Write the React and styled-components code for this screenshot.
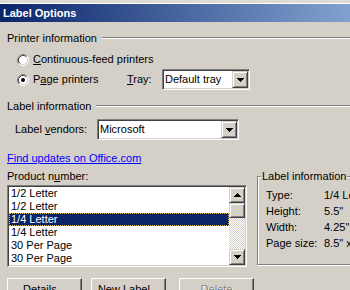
import React from 'react';
import styled, { createGlobalStyle } from 'styled-components';

const Global = createGlobalStyle`
  html, body { margin: 0; padding: 0; }
  body {
    background: #D4D0C8;
    font-family: "Liberation Sans", Arial, sans-serif;
    font-size: 11px;
    color: #000;
  }
  * { box-sizing: border-box; }
`;

const Window = styled.div`
  width: 350px;
  height: 290px;
  overflow: hidden;
  background: #D4D0C8;
  display: flex;
  flex-direction: column;
`;

const BehindStrip = styled.div`
  flex: none;
  height: 4px;
  overflow: hidden;
  background: #DEDBD4;
  border-bottom: 1px solid #fff;
  padding-left: 37px;
  line-height: 13px;
  color: #333;
`;

const BehindText = styled.div`
  margin-top: -10px;
`;

const TitleBar = styled.div`
  flex: none;
  height: 18px;
  padding-left: 3px;
  background: linear-gradient(90deg, #0A246A 0px, #A6CAF0 460px);
  color: #fff;
  font-weight: bold;
  font-size: 11px;
  line-height: 18px;
  white-space: nowrap;
`;

const Body = styled.div`
  padding-left: 7px;
  display: flex;
  flex-direction: column;
`;

const SectionHeader = styled.div`
  display: flex;
  align-items: center;
  height: 13px;
  margin-top: ${p => p.$top}px;
  white-space: nowrap;
`;

const Rule = styled.div`
  flex: 1;
  margin-left: 5px;
  height: 2px;
  border-top: 1px solid #808080;
  border-bottom: 1px solid #fff;
`;

const Row = styled.div`
  display: flex;
  align-items: center;
  height: ${p => p.$h}px;
  margin-top: ${p => p.$top}px;
  margin-left: ${p => p.$left || 0}px;
  white-space: nowrap;
`;

const RadioItem = styled.label`
  display: flex;
  align-items: center;
  gap: 4px;
  width: ${p => (p.$w ? `${p.$w}px` : 'auto')};
  line-height: 13px;
`;

const FieldLabel = styled.span`
  width: ${p => p.$w}px;
  flex: none;
  line-height: 13px;
`;

const Combo = styled.div`
  width: ${p => p.$w}px;
  height: 21px;
  flex: none;
  display: flex;
  align-items: stretch;
  background: #fff;
  border: 1px solid;
  border-color: #808080 #fff #fff #808080;
  box-shadow: inset 1px 1px #404040, inset -1px -1px #D4D0C8;
  padding: 1px;
`;

const ComboText = styled.span`
  flex: 1;
  padding-left: 1px;
  line-height: 17px;
  overflow: hidden;
`;

const SmallButton = styled.div`
  width: 16px;
  height: ${p => p.$h || 16}px;
  flex: none;
  display: flex;
  align-items: center;
  justify-content: center;
  background: #D4D0C8;
  border: 1px solid;
  border-color: #D4D0C8 #404040 #404040 #D4D0C8;
  box-shadow: inset 1px 1px #fff, inset -1px -1px #808080;
`;

const Link = styled.a`
  display: block;
  align-self: flex-start;
  margin-top: 12px;
  line-height: 13px;
  color: #0000FF;
  text-decoration: underline;
  cursor: pointer;
`;

const Lower = styled.div`
  display: flex;
  margin-top: 5px;
`;

const LeftCol = styled.div`
  width: 240px;
  flex: none;
  display: flex;
  flex-direction: column;
`;

const Caption = styled.div`
  line-height: 13px;
  height: 13px;
`;

const ListBox = styled.div`
  margin-top: 2px;
  height: 82px;
  display: flex;
  background: #fff;
  border: 1px solid;
  border-color: #808080 #fff #fff #808080;
  box-shadow: inset 1px 1px #404040, inset -1px -1px #D4D0C8;
  padding: 1px;
`;

const Items = styled.div`
  flex: 1;
  overflow: hidden;
`;

const Item = styled.div`
  height: 13px;
  line-height: 13px;
  padding-left: 2px;
  white-space: nowrap;
  background: ${p => (p.$sel ? '#0A246A' : 'transparent')};
  color: ${p => (p.$sel ? '#fff' : '#000')};
  outline: ${p => (p.$sel ? '1px dotted #E8C040' : 'none')};
  outline-offset: -1px;
`;

const ScrollBar = styled.div`
  width: 16px;
  flex: none;
  display: flex;
  flex-direction: column;
`;

const Thumb = styled.div`
  height: 15px;
  flex: none;
  background: #D4D0C8;
  border: 1px solid;
  border-color: #D4D0C8 #404040 #404040 #D4D0C8;
  box-shadow: inset 1px 1px #fff, inset -1px -1px #808080;
`;

const Track = styled.div`
  flex: 1;
  background-color: #fff;
  background-image: conic-gradient(#D4D0C8 25%, #fff 0 50%, #D4D0C8 0 75%, #fff 0);
  background-size: 2px 2px;
`;

const RightCol = styled.div`
  flex: none;
  margin-left: 10px;
  padding-top: 6px;
`;

const GroupBox = styled.div`
  position: relative;
  width: 120px;
  height: 89px;
  border: 1px solid #808080;
  box-shadow: inset 1px 1px #fff, 1px 1px #fff;
  padding: 12px 0 0 8px;
`;

const Legend = styled.span`
  position: absolute;
  top: -7px;
  left: 3px;
  padding: 0 1px;
  line-height: 13px;
  background: #D4D0C8;
  white-space: nowrap;
`;

const InfoGrid = styled.div`
  display: grid;
  grid-template-columns: 58px auto;
  grid-auto-rows: 16px;
  line-height: 13px;
  white-space: nowrap;
`;

const Buttons = styled.div`
  display: flex;
  margin-top: 11px;
`;

const PushButton = styled.div`
  width: ${p => p.$w || 75}px;
  height: 23px;
  flex: none;
  margin-left: ${p => p.$left || 0}px;
  display: flex;
  align-items: center;
  justify-content: center;
  background: #D4D0C8;
  border: 1px solid;
  border-color: #fff #404040 #404040 #fff;
  box-shadow: inset -1px -1px #808080;
  line-height: 13px;
  color: ${p => (p.$disabled ? '#808080' : '#000')};
  text-shadow: ${p => (p.$disabled ? '1px 1px #fff' : 'none')};
`;

const Arrow = ({ up }) => (
  <svg width="7" height="4" viewBox="0 0 7 4" shapeRendering="crispEdges" style={{ display: 'block', transform: up ? 'scaleY(-1)' : 'none' }}>
    <path d="M0 0h7v1h-1v1h-1v1h-1v1h-1v-1h-1v-1h-1v-1h-1z" fill="#000" />
  </svg>
);

const Radio = ({ checked }) => (
  <svg width="12" height="12" viewBox="0 0 12 12" style={{ display: 'block', flex: 'none' }}>
    <circle cx="6" cy="6" r="5" fill="#fff" />
    <path d="M2.11 9.89 A5.5 5.5 0 0 1 9.89 2.11" fill="none" stroke="#808080" strokeWidth="1" />
    <path d="M9.89 2.11 A5.5 5.5 0 0 1 2.11 9.89" fill="none" stroke="#fff" strokeWidth="1" />
    <path d="M2.82 9.18 A4.5 4.5 0 0 1 9.18 2.82" fill="none" stroke="#404040" strokeWidth="1" />
    <path d="M9.18 2.82 A4.5 4.5 0 0 1 2.82 9.18" fill="none" stroke="#D4D0C8" strokeWidth="1" />
    {checked && <circle cx="6" cy="6" r="2" fill="#000" />}
  </svg>
);

const ComboBox = ({ w, value }) => (
  <Combo $w={w}>
    <ComboText>{value}</ComboText>
    <SmallButton $h={17}><Arrow /></SmallButton>
  </Combo>
);

const products = ['1/2 Letter', '1/2 Letter', '1/4 Letter', '1/4 Letter', '30 Per Page', '30 Per Page', '30 Per Page'];

export default function App() {
  return (
    <>
      <Global />
      <Window>
        <BehindStrip><BehindText>Addresses</BehindText></BehindStrip>
        <TitleBar>Label Options</TitleBar>
        <Body>
          <SectionHeader $top={9}>Printer information<Rule /></SectionHeader>
          <Row $h={13} $top={9} $left={10}>
            <RadioItem><Radio /><span><u>C</u>ontinuous-feed printers</span></RadioItem>
          </Row>
          <Row $h={21} $top={3} $left={10}>
            <RadioItem $w={110}><Radio checked /><span>P<u>a</u>ge printers</span></RadioItem>
            <FieldLabel $w={35}><u>T</u>ray:</FieldLabel>
            <ComboBox w={88} value="Default tray" />
          </Row>
          <SectionHeader $top={9}>Label information<Rule /></SectionHeader>
          <Row $h={21} $top={7} $left={8}>
            <FieldLabel $w={82}>Label <u>v</u>endors:</FieldLabel>
            <ComboBox w={142} value="Microsoft" />
          </Row>
          <Link>Find updates on Office.com</Link>
          <Lower>
            <LeftCol>
              <Caption>Product n<u>u</u>mber:</Caption>
              <ListBox>
                <Items>
                  {products.map((p, i) => (
                    <Item key={i} $sel={i === 2}>{p}</Item>
                  ))}
                </Items>
                <ScrollBar>
                  <SmallButton><Arrow up /></SmallButton>
                  <Thumb />
                  <Track />
                  <SmallButton><Arrow /></SmallButton>
                </ScrollBar>
              </ListBox>
            </LeftCol>
            <RightCol>
              <GroupBox>
                <Legend>Label information</Legend>
                <InfoGrid>
                  <span>Type:</span><span>1/4 Letter</span>
                  <span>Height:</span><span>5.5"</span>
                  <span>Width:</span><span>4.25"</span>
                  <span>Page size:</span><span>8.5" x 11"</span>
                </InfoGrid>
              </GroupBox>
            </RightCol>
          </Lower>
          <Buttons>
            <PushButton>Details...</PushButton>
            <PushButton $left={9}>New Label...</PushButton>
            <PushButton $left={13} $disabled>Delete</PushButton>
          </Buttons>
        </Body>
      </Window>
    </>
  );
}
